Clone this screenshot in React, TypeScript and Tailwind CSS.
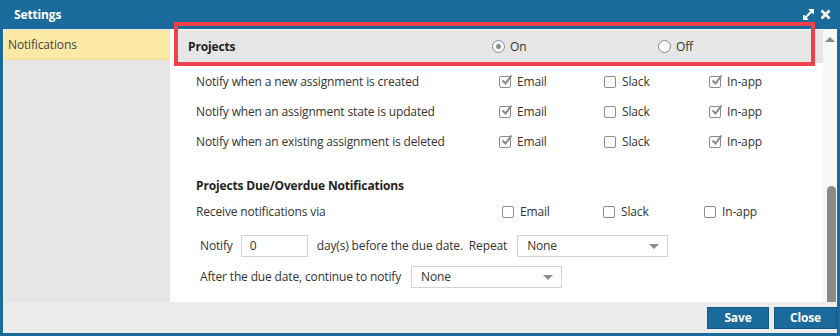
import React from 'react';

const font = { fontFamily: '"Open Sans", "Noto Sans", sans-serif' };

function CheckBox({ checked, label }: { checked?: boolean; label: string }) {
  return (
    <div className="flex items-center gap-[6px]">
      <span className="relative w-[12px] h-[12px] border border-[#8c8c8c] rounded-[2px] bg-white">
        {checked && (
          <svg className="absolute -top-[3px] left-[1px]" width="12" height="12" viewBox="0 0 12 12">
            <path d="M1.5 6.5 L4.5 9.5 L10.5 1.5" fill="none" stroke="#8a8a8a" strokeWidth="2" />
          </svg>
        )}
      </span>
      <span>{label}</span>
    </div>
  );
}

function Radio({ checked, label }: { checked?: boolean; label: string }) {
  return (
    <div className="flex items-center gap-[5px]">
      <span className="w-[13px] h-[13px] rounded-full border-[1.5px] border-[#888] bg-white flex items-center justify-center">
        {checked && <span className="w-[5px] h-[5px] rounded-full bg-[#8a8a8a]" />}
      </span>
      <span>{label}</span>
    </div>
  );
}

function Select({ width }: { width: string }) {
  return (
    <div className={`${width} h-[22px] border border-[#d4d4d4] bg-white flex items-center justify-between pl-[9px] pr-[8px]`}>
      <span>None</span>
      <span className="w-0 h-0 border-l-[5px] border-r-[5px] border-t-[5px] border-l-transparent border-r-transparent border-t-[#8a8a8a]" />
    </div>
  );
}

const rows = [
  'Notify when a new assignment is created',
  'Notify when an assignment state is updated',
  'Notify when an existing assignment is deleted',
];

export default function App() {
  return (
    <div style={font} className="relative w-[840px] h-[336px] bg-[#1b6a9c] px-[3px] pb-[3px] flex flex-col text-[12px] tracking-[-0.15px] text-[#333]">
      <div className="h-[29px] flex items-center justify-between pl-[11px] pr-[6px] text-white">
        <span className="font-bold text-[12px]">Settings</span>
        <div className="flex items-center gap-[5px]">
          <svg width="13" height="13" viewBox="0 0 13 13">
            <path d="M2 11 L11 2" stroke="white" strokeWidth="2" />
            <path d="M7 1.5 H11.5 V6 Z" fill="white" stroke="white" strokeWidth="1" />
            <path d="M1.5 7 V11.5 H6 Z" fill="white" stroke="white" strokeWidth="1" />
          </svg>
          <svg width="11" height="11" viewBox="0 0 11 11">
            <path d="M1.5 1.5 L9.5 9.5 M9.5 1.5 L1.5 9.5" stroke="white" strokeWidth="2.6" />
          </svg>
        </div>
      </div>

      <div className="flex flex-1 min-h-0">
        <div className="w-[167px] bg-[#e6e6e6] border-l border-[#f0f0f0]">
          <div className="mt-[1px] h-[30px] bg-[#fde9a6] border-b-2 border-[#f6e29c] flex items-center pl-[4px] pt-[2px] text-[#444]">
            Notifications
          </div>
        </div>

        <div className="flex-1 bg-white pl-[8px] pt-[1px]">
          <div className="h-[33px] bg-[#e6e6e6] flex items-center pl-[10px]">
            <span className="font-bold w-[304px] text-[#222]">Projects</span>
            <div className="w-[166px]"><Radio checked label="On" /></div>
            <Radio label="Off" />
          </div>

          <div className="mt-[4px] pl-[18px]">
            {rows.map((r) => (
              <div key={r} className="h-[30px] flex items-center">
                <span className="w-[303px]">{r}</span>
                <div className="w-[105px]"><CheckBox checked label="Email" /></div>
                <div className="w-[105px]"><CheckBox label="Slack" /></div>
                <CheckBox checked label="In-app" />
              </div>
            ))}
          </div>

          <div className="pl-[18px] mt-[19px] h-[20px] flex items-center font-bold text-[#222]">
            Projects Due/Overdue Notifications
          </div>
          <div className="pl-[18px] mt-[3px] h-[26px] flex items-center">
            <span className="w-[306px]">Receive notifications via</span>
            <div className="w-[101px]"><CheckBox label="Email" /></div>
            <div className="w-[101px]"><CheckBox label="Slack" /></div>
            <CheckBox label="In-app" />
          </div>

          <div className="pl-[22px] mt-[10px] h-[22px] flex items-center">
            <span>Notify</span>
            <div className="ml-[8px] w-[67px] h-[22px] border border-[#d4d4d4] flex items-center pl-[8px]">0</div>
            <span className="ml-[9px]">day(s) before the due date.&nbsp; Repeat</span>
            <div className="ml-[10px]"><Select width="w-[151px]" /></div>
          </div>
          <div className="pl-[22px] mt-[9px] h-[22px] flex items-center">
            <span>After the due date, continue to notify</span>
            <div className="ml-[10px]"><Select width="w-[151px]" /></div>
          </div>
        </div>

        <div className="w-[14px] bg-[#f7f7f7] flex flex-col items-center">
          <span className="mt-[8px] w-0 h-0 border-l-[5px] border-r-[5px] border-b-[5px] border-l-transparent border-r-transparent border-b-[#8a8a8a]" />
          <div className="mt-auto w-[9px] ml-[3px] h-[116px] bg-[#8a8a8a] rounded-t-[5px]" />
        </div>
      </div>

      <div className="h-[31px] bg-[#ececec] flex items-center justify-end gap-[5px]">
        <button className="w-[62px] h-[22px] bg-[#1b6a9c] border border-[#155a86] text-white font-bold text-[12px]">Save</button>
        <button className="w-[63px] h-[22px] bg-[#1b6a9c] border border-[#155a86] text-white font-bold text-[12px]">Close</button>
      </div>

      <div className="absolute left-[174px] top-[22px] w-[641px] h-[44px] border-4 border-[#f0414a]" />
    </div>
  );
}
